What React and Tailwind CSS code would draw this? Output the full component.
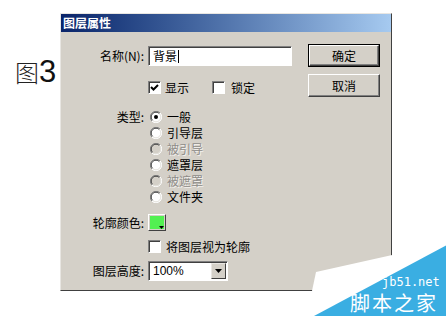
import React from "react";

const cjk = { fontFamily: '"Noto Sans CJK SC", "Liberation Sans", sans-serif' };

function Radio({ checked, disabled }) {
  return (
    <svg width="12" height="12" viewBox="0 0 12 12" className="shrink-0">
      <circle cx="6" cy="6" r="5.5" fill={disabled ? "#d4d0c8" : "#ffffff"} />
      <path d="M1.9 10.1 A5.8 5.8 0 0 1 10.1 1.9" fill="none" stroke="#808080" strokeWidth="1" />
      <path d="M10.1 1.9 A5.8 5.8 0 0 1 1.9 10.1" fill="none" stroke="#ffffff" strokeWidth="1" />
      <path d="M2.6 9.4 A4.8 4.8 0 0 1 9.4 2.6" fill="none" stroke="#404040" strokeWidth="1" />
      <path d="M9.4 2.6 A4.8 4.8 0 0 1 2.6 9.4" fill="none" stroke="#e4e2dc" strokeWidth="1" />
      {checked && <circle cx="6" cy="6" r="2" fill="#000" />}
    </svg>
  );
}

function Check({ checked }) {
  return (
    <div className="w-[13px] h-[13px] shrink-0 bg-white border border-t-[#808080] border-l-[#808080] border-b-white border-r-white shadow-[inset_1px_1px_0_#404040] flex items-center justify-center">
      {checked && (
        <svg width="9" height="9" viewBox="0 0 9 9">
          <path d="M1 4 L3.5 6.5 L8 2" fill="none" stroke="#000" strokeWidth="2" />
        </svg>
      )}
    </div>
  );
}

function RadioRow({ label, checked, disabled }) {
  return (
    <div className="h-[16px] flex items-center gap-[5px]">
      <Radio checked={checked} disabled={disabled} />
      <span className={disabled ? "text-[#8e8c88] [text-shadow:1px_1px_0_#f4f2ee]" : "text-black"}>{label}</span>
    </div>
  );
}

function Label({ children }) {
  return <div className="w-[83px] mr-[4px] text-right shrink-0 whitespace-nowrap">{children}</div>;
}

export default function App() {
  return (
    <div className="w-[446px] h-[316px] bg-white relative overflow-hidden flex" style={cjk}>
      {/* left caption */}
      <div className="w-[60px] shrink-0 pl-[15px] pt-[56px] flex items-baseline leading-none">
        <span className="text-[24px] font-light text-[#222]" style={cjk}>图</span>
        <span className="text-[31px] text-[#111]" style={{ fontFamily: '"Liberation Sans", Arial, sans-serif' }}>3</span>
      </div>

      {/* dialog */}
      <div className="mt-[13px] w-[332px] h-[278px] bg-[#d4d0c8] border border-l-[#e8e6e2] border-t-[#e8e6e2] border-r-[#404040] border-b-[#404040] flex flex-col text-[12px] text-black leading-none">
        <div className="h-[18px] bg-gradient-to-r from-[#0a246a] to-[#a6caf0] flex items-center pl-[2px]">
          <span className="text-white font-bold text-[12px]">图层属性</span>
        </div>

        <div className="flex flex-1">
          {/* left form */}
          <div className="flex-1 flex flex-col">
            <div className="mt-[14px] flex items-center h-[20px]">
              <Label>名称(N):</Label>
              <div className="w-[144px] h-[20px] bg-white border border-t-[#808080] border-l-[#808080] border-b-white border-r-white shadow-[inset_1px_1px_0_#404040] flex items-center pl-[4px]">
                <span>背景</span>
                <span className="w-[1px] h-[13px] bg-black ml-[1px]"></span>
              </div>
            </div>

            <div className="mt-[15px] flex items-center h-[13px] pl-[87px]">
              <Check checked />
              <span className="ml-[4px]">显示</span>
              <div className="ml-[23px]">
                <Check />
              </div>
              <span className="ml-[6px]">锁定</span>
            </div>

            <div className="mt-[15px] flex">
              <div className="h-[16px] flex items-center">
                <Label>类型:</Label>
              </div>
              <div className="flex flex-col pl-[2px]">
                <RadioRow label="一般" checked />
                <RadioRow label="引导层" />
                <RadioRow label="被引导" disabled />
                <RadioRow label="遮罩层" />
                <RadioRow label="被遮罩" disabled />
                <RadioRow label="文件夹" />
              </div>
            </div>

            <div className="mt-[9px] flex items-center h-[17px]">
              <Label>轮廓颜色:</Label>
              <div className="w-[18px] h-[17px] bg-[#d4d0c8] border border-t-white border-l-white border-b-[#404040] border-r-[#404040] p-[1px] relative">
                <div className="w-full h-full bg-[#52f052]"></div>
                <svg width="5" height="3" viewBox="0 0 5 3" className="absolute right-[1px] bottom-[1px]">
                  <path d="M0 0 H5 L2.5 3 Z" fill="#000" />
                </svg>
              </div>
            </div>

            <div className="mt-[9px] flex items-center h-[13px] pl-[87px]">
              <Check />
              <span className="ml-[5px]">将图层视为轮廓</span>
            </div>

            <div className="mt-[8px] flex items-center h-[20px]">
              <Label>图层高度:</Label>
              <div className="w-[80px] h-[20px] bg-white border border-t-[#808080] border-l-[#808080] border-b-white border-r-white shadow-[inset_1px_1px_0_#404040] flex items-center justify-between pl-[4px] pr-[1px]">
                <span style={{ fontFamily: '"Liberation Sans", Arial, sans-serif' }}>100%</span>
                <div className="w-[15px] h-[16px] bg-[#d4d0c8] border border-t-[#e8e6e2] border-l-[#e8e6e2] border-b-[#404040] border-r-[#404040] flex items-center justify-center">
                  <svg width="7" height="4" viewBox="0 0 7 4">
                    <path d="M0 0 H7 L3.5 4 Z" fill="#000" />
                  </svg>
                </div>
              </div>
            </div>
          </div>

          {/* buttons */}
          <div className="w-[72px] mr-[11px] pt-[12px] flex flex-col gap-[7px]">
            <div className="h-[23px] border border-black bg-[#d4d0c8] flex">
              <div className="flex-1 border border-t-white border-l-white border-b-[#404040] border-r-[#404040] flex items-center justify-center shadow-[inset_-1px_-1px_0_#808080]">
                确定
              </div>
            </div>
            <div className="h-[23px] border border-t-white border-l-white border-b-[#404040] border-r-[#404040] bg-[#d4d0c8] flex items-center justify-center shadow-[inset_-1px_-1px_0_#808080]">
              取消
            </div>
          </div>
        </div>
      </div>

      {/* watermark overlay */}
      <svg width="446" height="316" viewBox="0 0 446 316" className="absolute left-0 top-0 pointer-events-none">
        <polygon points="316,272 446,243 446,316 309,316 312,291" fill="#ffffff" />
        <polygon points="447,245 447,316 314,316" fill="#3aaee2" />
      </svg>
      <div className="absolute left-[382px] top-[276px] h-[13px] text-white text-[12px] leading-[13px]" style={{ fontFamily: '"DejaVu Sans Mono", monospace' }}>
        jb51.net
      </div>
      <div className="absolute left-[350px] top-[293px] h-[20px] text-white text-[20px] leading-[20px] tracking-[2px]" style={cjk}>
        脚本之家
      </div>
    </div>
  );
}
